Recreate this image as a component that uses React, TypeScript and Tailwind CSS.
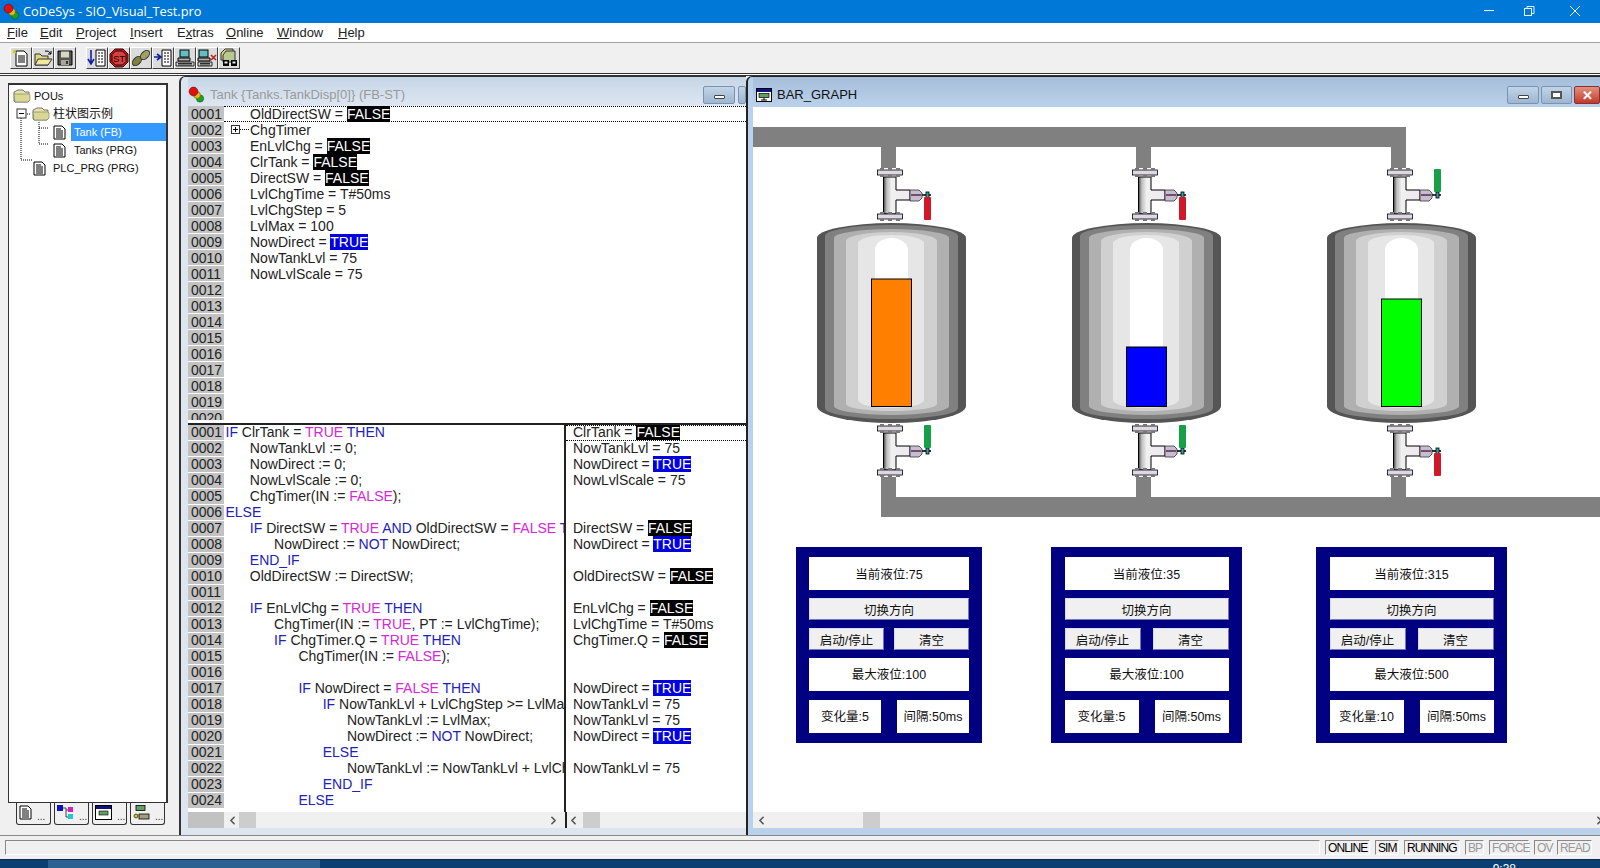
import { ChevronLeft, ChevronRight } from 'lucide-react'
import type { ReactNode } from 'react'

const TrafficIcon = () => (
  <svg width="17" height="17" viewBox="0 0 17 17">
    <circle cx="12" cy="12.5" r="3.6" fill="#20a020" stroke="#0a500a" strokeWidth="0.6" />
    <circle cx="9" cy="9" r="3.4" fill="#d8c020" stroke="#706000" strokeWidth="0.6" />
    <circle cx="5.5" cy="5.5" r="4.4" fill="#e01010" stroke="#700000" strokeWidth="0.6" />
  </svg>
)

const FolderIcon = () => (
  <svg width="18" height="14" viewBox="0 0 18 14">
    <path d="M1 3 L5 1 H10 L12 3 H16 V12 L15 13 H2 L1 12 Z" fill="#e8e4a8" stroke="#555" strokeWidth="0.8" />
    <path d="M1 5 H16 L17 6 V11 L15 13 H2 Z" fill="#d8d890" stroke="#777" strokeWidth="0.6" />
  </svg>
)

const DocIcon = ({ size = 13 }: { size?: number }) => (
  <svg width={size} height={size + 2} viewBox="0 0 13 15">
    <path d="M1 1 H9 L12 4 V14 H1 Z" fill="#fff" stroke="#000" strokeWidth="1" />
    <path d="M3 4 H8 M3 6 H10 M3 8 H10 M3 10 H10 M3 12 H10" stroke="#000" strokeWidth="1" />
  </svg>
)

const toolIcons: ReactNode[] = [
  <svg key="new" width="20" height="20" viewBox="0 0 20 20">
    <path d="M5 3 H13 L16 6 V18 H5 Z" fill="#fff" stroke="#000" />
    <path d="M7 8 H14 M7 10 H14 M7 12 H14 M7 14 H14" stroke="#000" />
    <path d="M2 2 L5 5 M5 2 L2 5" stroke="#c8c820" strokeWidth="1.4" />
  </svg>,
  <svg key="open" width="20" height="20" viewBox="0 0 20 20">
    <path d="M2 6 H7 L9 8 H15 V17 H2 Z" fill="#d8d880" stroke="#333" />
    <path d="M2 17 L5 11 H19 L15 17 Z" fill="#f0e8a0" stroke="#333" />
    <path d="M12 3 Q16 2 18 6 M18 3 V6 H15" fill="none" stroke="#000" />
  </svg>,
  <svg key="save" width="20" height="20" viewBox="0 0 20 20">
    <path d="M3 3 H17 V17 H3 Z" fill="#555" stroke="#000" />
    <rect x="6" y="3.5" width="8" height="6" fill="#d8d8c0" />
    <rect x="6" y="12" width="8" height="5" fill="#a8a890" />
    <rect x="11" y="13" width="2" height="3" fill="#333" />
  </svg>,
  <svg key="stepin" width="20" height="20" viewBox="0 0 20 20">
    <path d="M9 2 H18 V18 H9 Z" fill="#fff" stroke="#000" />
    <path d="M11 5 H16 M11 8 H16 M11 11 H16 M11 14 H16" stroke="#000" strokeDasharray="2 1" />
    <path d="M4 2 V15 M1 11 L4 16 L7 11" fill="none" stroke="#1020a0" strokeWidth="1.6" />
  </svg>,
  <svg key="stop" width="20" height="20" viewBox="0 0 20 20">
    <path d="M6 1 H14 L19 6 V14 L14 19 H6 L1 14 V6 Z" fill="#c02020" stroke="#400" />
    <path d="M6.5 3 H13.5 L17 6.5 V13.5 L13.5 17 H6.5 L3 13.5 V6.5 Z" fill="#d84040" stroke="#300" />
    <text x="10" y="13.5" textAnchor="middle" fontSize="9.5" fontFamily="Liberation Sans" fill="#200">ST</text>
  </svg>,
  <svg key="step" width="20" height="20" viewBox="0 0 20 20">
    <ellipse cx="6" cy="13" rx="3.5" ry="5.5" transform="rotate(45 6 13)" fill="#808040" stroke="#333" />
    <ellipse cx="14" cy="7" rx="3.5" ry="5.5" transform="rotate(45 14 7)" fill="#a0a060" stroke="#333" />
  </svg>,
  <svg key="stepover" width="20" height="20" viewBox="0 0 20 20">
    <path d="M9 2 H18 V18 H9 Z" fill="#fff" stroke="#000" />
    <path d="M11 5 H16 M11 8 H16 M11 11 H16 M11 14 H16" stroke="#000" strokeDasharray="2 1" />
    <path d="M1 9 H7 M4 6 L8 9 L4 12" fill="none" stroke="#1020a0" strokeWidth="1.6" />
  </svg>,
  <svg key="login" width="20" height="20" viewBox="0 0 20 20">
    <rect x="5" y="2" width="9" height="7" fill="#60c0c0" stroke="#000" />
    <path d="M3 10 H15 V13 H3 Z" fill="#b0b0b0" stroke="#000" />
    <path d="M1 14 H19 V18 H1 Z M3 15.5 H17 M3 17 H17" fill="#d0d0d0" stroke="#000" strokeWidth="0.8" />
  </svg>,
  <svg key="logout" width="20" height="20" viewBox="0 0 20 20">
    <rect x="2" y="2" width="9" height="7" fill="#60c0c0" stroke="#000" />
    <path d="M1 10 H13 V13 H1 Z" fill="#b0b0b0" stroke="#000" />
    <path d="M1 14 H15 V18 H1 Z M3 15.5 H13 M3 17 H13" fill="#d0d0d0" stroke="#000" strokeWidth="0.8" />
    <path d="M14 7 L19 12 M19 7 L14 12" stroke="#c02020" strokeWidth="1.6" />
  </svg>,
  <svg key="archive" width="20" height="20" viewBox="0 0 20 20">
    <path d="M2 5 L6 1 H14 V12 H2 Z" fill="#d8d880" stroke="#333" />
    <path d="M4 7 L7 3 H16 V14 H4 Z" fill="#b8c890" stroke="#333" />
    <rect x="4" y="12" width="6" height="6" fill="#000" />
    <rect x="12" y="12" width="6" height="6" fill="#000" />
    <rect x="5.5" y="13.5" width="3" height="2" fill="#eee" />
    <rect x="13.5" y="13.5" width="3" height="2" fill="#eee" />
  </svg>,
]

const ToolButton = ({ children }: { children: ReactNode }) => (
  <div className="flex h-[22px] w-[22px] items-center justify-center border-t border-l border-t-white border-l-white border-r border-b border-r-[#404040] border-b-[#404040] bg-[#dcdcdc]">
    {children}
  </div>
)

const menuItems = [
  { pre: '', ul: 'F', post: 'ile', w: 'w-[33px]' },
  { pre: '', ul: 'E', post: 'dit', w: 'w-[36px]' },
  { pre: '', ul: 'P', post: 'roject', w: 'w-[54px]' },
  { pre: '', ul: 'I', post: 'nsert', w: 'w-[47px]' },
  { pre: 'E', ul: 'x', post: 'tras', w: 'w-[49px]' },
  { pre: '', ul: 'O', post: 'nline', w: 'w-[51px]' },
  { pre: '', ul: 'W', post: 'indow', w: 'w-[61px]' },
  { pre: '', ul: 'H', post: 'elp', w: 'w-[40px]' },
]

const topLines = [
  ['OldDirectSW', 'FALSE'],
  ['ChgTimer'],
  ['EnLvlChg', 'FALSE'],
  ['ClrTank', 'FALSE'],
  ['DirectSW', 'FALSE'],
  ['LvlChgTime', 'T#50ms'],
  ['LvlChgStep', '5'],
  ['LvlMax', '100'],
  ['NowDirect', 'TRUE'],
  ['NowTankLvl', '75'],
  ['NowLvlScale', '75'],
]

const codeLines: [number, string][] = [
  [0, 'IF ClrTank = TRUE THEN'],
  [1, 'NowTankLvl := 0;'],
  [1, 'NowDirect := 0;'],
  [1, 'NowLvlScale := 0;'],
  [1, 'ChgTimer(IN := FALSE);'],
  [0, 'ELSE'],
  [1, 'IF DirectSW = TRUE AND OldDirectSW = FALSE THEN'],
  [2, 'NowDirect := NOT NowDirect;'],
  [1, 'END_IF'],
  [1, 'OldDirectSW := DirectSW;'],
  [0, ''],
  [1, 'IF EnLvlChg = TRUE THEN'],
  [2, 'ChgTimer(IN := TRUE, PT := LvlChgTime);'],
  [2, 'IF ChgTimer.Q = TRUE THEN'],
  [3, 'ChgTimer(IN := FALSE);'],
  [0, ''],
  [3, 'IF NowDirect = FALSE THEN'],
  [4, 'IF NowTankLvl + LvlChgStep >= LvlMax THEN'],
  [5, 'NowTankLvl := LvlMax;'],
  [5, 'NowDirect := NOT NowDirect;'],
  [4, 'ELSE'],
  [5, 'NowTankLvl := NowTankLvl + LvlChgStep;'],
  [4, 'END_IF'],
  [3, 'ELSE'],
]

const watchLines: (string[] | null)[] = [
  ['ClrTank', 'FALSE'],
  ['NowTankLvl', '75'],
  ['NowDirect', 'TRUE'],
  ['NowLvlScale', '75'],
  null,
  null,
  ['DirectSW', 'FALSE'],
  ['NowDirect', 'TRUE'],
  null,
  ['OldDirectSW', 'FALSE'],
  null,
  ['EnLvlChg', 'FALSE'],
  ['LvlChgTime', 'T#50ms'],
  ['ChgTimer.Q', 'FALSE'],
  null,
  null,
  ['NowDirect', 'TRUE'],
  ['NowTankLvl', '75'],
  ['NowTankLvl', '75'],
  ['NowDirect', 'TRUE'],
  null,
  ['NowTankLvl', '75'],
  null,
  null,
]

const lineNo = (i: number) => String(i + 1).padStart(4, '0')

const Token = ({ word }: { word: string }) => {
  if (/^(IF|THEN|ELSE|END_IF|AND|NOT)$/.test(word)) return <span className="text-[#2222bb]">{word}</span>
  if (/^(TRUE|FALSE)$/.test(word)) return <span className="text-[#d628d6]">{word}</span>
  return <>{word}</>
}

const CodeText = ({ text }: { text: string }) => (
  <>
    {text.split(/(\bEND_IF\b|\bIF\b|\bTHEN\b|\bELSE\b|\bAND\b|\bNOT\b|\bTRUE\b|\bFALSE\b)/).map((w, i) => (
      <Token key={i} word={w} />
    ))}
  </>
)

const Watch = ({ line }: { line: string[] }) => {
  const value = line[1]
  let shown: ReactNode = value
  if (value === 'FALSE') shown = <span className="bg-black text-white">FALSE</span>
  if (value === 'TRUE') shown = <span className="bg-[#0000e0] text-white">TRUE</span>
  return (
    <>
      {line[0]}
      {value ? ' = ' : ''}
      {shown}
    </>
  )
}

const NumCell = ({ i, top }: { i: number; top?: boolean }) => (
  <div
    className={`h-[16px] w-[36px] shrink-0 overflow-hidden border-b border-white bg-[#c2c2c2] pl-[3px] text-[14px] text-[#222] ${
      top ? 'leading-[17px]' : 'leading-[15px]'
    }`}
  >
    {lineNo(i)}
  </div>
)

const ScrollBar = ({ thumb, right }: { thumb: string; right?: boolean }) => (
  <div className="flex h-[16px] min-w-0 flex-1 items-center bg-[#f0f0f0]">
    <ChevronLeft size={13} strokeWidth={3} className="shrink-0 text-[#555]" />
    <div className={`h-[16px] w-[17px] shrink-0 bg-[#cdcdcd] ${thumb}`} />
    <div className="flex-1" />
    {right && <ChevronRight size={13} strokeWidth={3} className="mr-[5px] shrink-0 text-[#555]" />}
  </div>
)

const WinButton = ({ kind, w }: { kind: 'min' | 'max' | 'close' | 'plain'; w: string }) => (
  <div
    className={`flex h-[18px] items-center justify-center rounded-[2px] border ${w} ${
      kind === 'close'
        ? 'border-[#8a3030] bg-gradient-to-b from-[#e09080] to-[#c03828]'
        : 'border-[#7c93ae] bg-gradient-to-b from-[#c2d4e8] to-[#9db6d0]'
    }`}
  >
    {kind === 'min' && <div className="mt-[4px] h-[4px] w-[11px] rounded-[1px] border border-[#444] bg-white" />}
    {kind === 'max' && <div className="h-[8px] w-[11px] border-2 border-[#555] bg-white" />}
    {kind === 'close' && <span className="text-[13px] leading-none font-bold text-white">✕</span>}
  </div>
)

// one tank body: nested bands with domed ends, like the bitmap in the visualization
const bands: [number, number, number, number, number, number, string][] = [
  [817, 966, 238, 223, 406, 423, '#555555'],
  [825, 958, 236, 225, 408, 419, '#808080'],
  [834, 949, 238, 229, 406, 415, '#b0b0b0'],
  [846, 937, 241, 232, 404, 411, '#d0d0d0'],
  [858, 924, 243, 235, 400, 408, '#e6e6e6'],
  [875, 908, 250, 238, 400, 406, '#ffffff'],
]

const Tank = ({ dx, top, fill }: { dx: number; top: number; fill: string }) => (
  <g transform={`translate(${dx} 0)`}>
    {bands.map(([x0, x1, ys, a, yb, ba, c]) => {
      const rx = (x1 - x0) / 2
      return (
        <path
          key={c}
          fill={c}
          d={`M${x0} ${yb} V${ys} A${rx} ${ys - a} 0 0 1 ${x1} ${ys} V${yb} A${rx} ${ba - yb} 0 0 1 ${x0} ${yb} Z`}
        />
      )
    })}
    <rect x="871.5" y={top} width="40" height={406.5 - top} fill={fill} stroke="#000" />
  </g>
)

const Flange = ({ y }: { y: number }) => (
  <g>
    <rect x="877.5" y={y + 2} width="25" height="5" fill="#dcd8e4" stroke="#000" strokeWidth="0.8" />
    <rect x="880" y={y} width="4" height="2" fill="#777" />
    <rect x="888" y={y} width="4" height="2" fill="#777" />
    <rect x="896" y={y} width="4" height="2" fill="#777" />
    <rect x="880" y={y + 7} width="4" height="2" fill="#777" />
    <rect x="888" y={y + 7} width="4" height="2" fill="#777" />
    <rect x="896" y={y + 7} width="4" height="2" fill="#777" />
  </g>
)

const Valve = ({ dx, y, color, up }: { dx: number; y: number; color: string; up: boolean }) => (
  <g transform={`translate(${dx} ${y - 168})`}>
    <path d="M883.5 177 H896 V190 H910 V200 H896 V214 H883.5 Z" fill="url(#valveBody)" stroke="#000" strokeWidth="1" />
    <Flange y={168} />
    <Flange y={212} />
    <path d="M910 190 H919 L922 193 V198 L919 201 H910 Z" fill="#c8bcd0" stroke="#333" strokeWidth="0.8" />
    <rect x="911" y="194" width="10" height="2" fill="#705070" />
    <path d="M922 195 H931" stroke="#000" strokeWidth="1.6" />
    <rect x="926" y="192" width="3" height="6" fill="#30a0a0" stroke="#000" strokeWidth="0.8" />
    <rect x="924" y={up ? 169 : 197} width="7" height="23" rx="1" fill={color} />
  </g>
)

const DiagramCanvas = () => (
  <svg width="847" height="433" viewBox="753 107 847 433" className="block shrink-0">
    <defs>
      <linearGradient id="valveBody" x1="0" x2="1" y1="0" y2="0">
        <stop offset="0" stopColor="#444" />
        <stop offset="0.12" stopColor="#bbb" />
        <stop offset="0.3" stopColor="#f0f0f0" />
        <stop offset="1" stopColor="#eee8f0" />
      </linearGradient>
    </defs>
    <rect x="753" y="127" width="653" height="20" fill="#808080" />
    <rect x="881" y="497" width="719" height="20" fill="#808080" />
    {[0, 255, 510].map(dx => (
      <g key={dx} fill="#808080">
        <rect x={881 + dx} y="147" width="15" height="21" />
        <rect x={881 + dx} y="477" width="15" height="20" />
      </g>
    ))}
    <Tank dx={0} top={279} fill="#ff8000" />
    <Tank dx={255} top={347} fill="#0000ff" />
    <Tank dx={510} top={299} fill="#00ff00" />
    <Valve dx={0} y={168} color="#d01828" up={false} />
    <Valve dx={255} y={168} color="#d01828" up={false} />
    <Valve dx={510} y={168} color="#18a048" up={true} />
    <Valve dx={0} y={424} color="#18a048" up={true} />
    <Valve dx={255} y={424} color="#18a048" up={true} />
    <Valve dx={510} y={424} color="#d01828" up={false} />
  </svg>
)

const Field = ({ children, className }: { children: ReactNode; className: string }) => (
  <div className={`flex items-center justify-center bg-white text-[12.5px] text-[#111] ${className}`}>{children}</div>
)

const PanelButton = ({ children, className }: { children: ReactNode; className: string }) => (
  <div
    className={`flex h-[22px] items-center justify-center border border-t-[#d8dcf4] border-l-[#d8dcf4] border-r-[#7078b8] border-b-[#7078b8] bg-[#f0f0f0] pt-[4px] text-[12.5px] text-[#111] ${className}`}
  >
    {children}
  </div>
)

const panels = [
  { level: 75, max: 100, step: 5, box: 'ml-[43px] w-[186px]', inner: 'w-[160px]', cell: 'w-[72px]', half: 'w-[75px]' },
  { level: 35, max: 100, step: 5, box: 'ml-[69px] w-[191px]', inner: 'w-[164px]', cell: 'w-[74px]', half: 'w-[76px]' },
  { level: 315, max: 500, step: 10, box: 'ml-[74px] w-[191px]', inner: 'w-[164px]', cell: 'w-[74px]', half: 'w-[76px]' },
]

const ControlPanel = ({ panel }: { panel: (typeof panels)[number] }) => (
  <div className={`flex h-[196px] shrink-0 justify-center bg-[#000080] pt-[10px] ${panel.box}`}>
    <div className={`flex flex-col gap-[8px] ${panel.inner}`}>
      <Field className="h-[33px] pt-[4px]">当前液位:{panel.level}</Field>
      <PanelButton className="w-full">切换方向</PanelButton>
      <div className="flex justify-between">
        <PanelButton className={panel.half}>启动/停止</PanelButton>
        <PanelButton className={panel.half}>清空</PanelButton>
      </div>
      <Field className="h-[33px] pt-[2px]">最大液位:{panel.max}</Field>
      <div className="mt-[1px] flex justify-between">
        <Field className={`h-[33px] pt-[2px] ${panel.cell}`}>变化量:{panel.step}</Field>
        <Field className={`h-[33px] pt-[2px] ${panel.cell}`}>间隔:50ms</Field>
      </div>
    </div>
  </div>
)

const statusItems = [
  { t: 'ONLINE', w: 'w-[45px]', on: true },
  { t: 'SIM', w: 'w-[24px]', on: true },
  { t: 'RUNNING', w: 'w-[56px]', on: true },
  { t: 'BP', w: 'w-[19px]', on: false },
  { t: 'FORCE', w: 'w-[40px]', on: false },
  { t: 'OV', w: 'w-[18px]', on: false },
  { t: 'READ', w: 'w-[35px]', on: false },
]

const TreePanel = () => (
  <div className="flex w-[179px] shrink-0 flex-col bg-[#f0f0f0] pt-[7px] pl-[8px]">
    <div className="relative h-[720px] w-[160px] border border-t-2 border-r-2 border-[#333] bg-white pt-[2px] pl-[4px] text-[11px] text-[#111]">
      {/* tree connector lines lie over the rows */}
      <svg className="absolute top-[-3px] left-0" width="60" height="100">
        <path d="M12 32 V78 H24 M12 32 H22 M30 40 V62 H40 M30 46 H40" fill="none" stroke="#000" strokeDasharray="1 1" />
        <rect x="8" y="27" width="9" height="9" fill="#fff" stroke="#333" />
        <path d="M10 31.5 H15" stroke="#000" />
      </svg>
      <div className="flex h-[18px] items-center gap-[3px]">
        <FolderIcon />
        <span>POUs</span>
      </div>
      <div className="flex h-[18px] items-center gap-[3px] pl-[19px]">
        <FolderIcon />
        <span className="text-[12px]">柱状图示例</span>
      </div>
      <div className="flex h-[18px] items-center pl-[40px]">
        <DocIcon />
        <span className="ml-[5px] flex h-[18px] flex-1 items-center bg-[#3399ff] pl-[3px] text-white">Tank (FB)</span>
      </div>
      <div className="flex h-[18px] items-center pl-[40px]">
        <DocIcon />
        <span className="ml-[5px] pl-[3px]">Tanks (PRG)</span>
      </div>
      <div className="flex h-[18px] items-center gap-[7px] pl-[20px]">
        <DocIcon />
        <span>PLC_PRG (PRG)</span>
      </div>
    </div>
    <div className="ml-[8px] flex gap-[3px]">
      {[
        <DocIcon key="a" size={13} />,
        <svg key="b" width="17" height="15" viewBox="0 0 17 15">
          <rect x="0" y="0" width="6" height="6" fill="#1010c0" />
          <rect x="11" y="2" width="5" height="5" fill="#d020c0" />
          <rect x="11" y="9" width="5" height="5" fill="#20c8d0" />
          <path d="M6 3 H9 V12 H11 M9 5 H11" fill="none" stroke="#444" />
        </svg>,
        <svg key="c" width="17" height="15" viewBox="0 0 17 15">
          <rect x="0.5" y="0.5" width="16" height="14" fill="#fff" stroke="#000" />
          <rect x="1" y="1" width="15" height="3" fill="#101080" />
          <rect x="4" y="6" width="9" height="4" fill="#60a060" stroke="#000" strokeWidth="0.6" />
        </svg>,
        <svg key="d" width="17" height="15" viewBox="0 0 17 15">
          <rect x="3" y="0.5" width="9" height="5" fill="#60a060" stroke="#000" strokeWidth="0.8" />
          <rect x="6" y="9" width="10" height="5" fill="#a0a080" stroke="#000" strokeWidth="0.8" />
          <circle cx="3" cy="11" r="2" fill="#c8c820" stroke="#000" strokeWidth="0.6" />
        </svg>,
      ].map((icon, i) => (
        <div
          key={i}
          className="flex h-[22px] w-[35px] items-start gap-[5px] rounded-b-[3px] border-r border-b border-l border-[#333] bg-[#f0f0f0] pt-[2px] pl-[2px] text-[10px] text-[#333]"
        >
          {icon}
          <span className="mt-[4px]">...</span>
        </div>
      ))}
    </div>
  </div>
)

const TankWindow = () => (
  <div className="flex w-[567px] shrink-0 flex-col rounded-tl-[6px] border-t border-l-2 border-[#333] bg-[#dde6f0] pl-[7px]">
    <div className="flex h-[29px] shrink-0 items-center bg-gradient-to-b from-[#c6d5e6] to-[#dde7f2] pt-[6px]">
      <TrafficIcon />
      <span className="ml-[5px] text-[13px] text-[#9a9a9a]">Tank {'{Tanks.TankDisp[0]}'} (FB-ST)</span>
      <div className="flex-1" />
      <WinButton kind="min" w="w-[32px]" />
      <WinButton kind="plain" w="ml-[3px] w-[8px]" />
    </div>

    {/* declaration part */}
    <div className="flex h-[314px] shrink-0 overflow-hidden bg-white text-[14px] text-[#222]">
      <div className="shrink-0">
        {Array.from({ length: 20 }, (_, i) => (
          <NumCell key={i} i={i} top />
        ))}
      </div>
      <div className="min-w-0 flex-1">
        {topLines.map((line, i) => (
          <div
            key={i}
            className={`relative h-[16px] pl-[26px] whitespace-pre ${
              i === 0 ? 'border-y border-dotted border-black leading-[15px]' : 'leading-[17px]'
            }`}
          >
            {i === 1 && (
              <svg className="absolute top-[3px] left-[7px]" width="20" height="10">
                <rect x="0.5" y="0.5" width="8" height="8" fill="#fff" stroke="#333" />
                <path d="M2 4.5 H7 M4.5 2 V7" stroke="#000" />
                <path d="M9 4.5 H18" stroke="#000" strokeDasharray="1 1" />
              </svg>
            )}
            <Watch line={line} />
          </div>
        ))}
      </div>
    </div>
    <div className="h-[3px] shrink-0 bg-white" />
    <div className="h-[2px] shrink-0 bg-[#222]" />

    {/* body part */}
    <div className="flex h-[387px] shrink-0 overflow-hidden bg-white text-[14px] leading-[15px] text-[#222]">
      <div className="shrink-0">
        {codeLines.map((_, i) => (
          <NumCell key={i} i={i} />
        ))}
      </div>
      <div className="w-[340px] shrink-0 overflow-hidden pl-[1.5px]">
        {codeLines.map(([indent, text], i) => (
          <div key={i} className="h-[16px] whitespace-pre" style={{ paddingLeft: indent * 24.3 }}>
            <CodeText text={text} />
          </div>
        ))}
      </div>
      <div className="min-w-0 flex-1 border-l-2 border-[#222]">
        {watchLines.map((line, i) => (
          <div
            key={i}
            className={`h-[16px] pl-[7px] whitespace-pre ${i === 0 ? 'border-y border-dotted border-black leading-[13px]' : ''}`}
          >
            {line && <Watch line={line} />}
          </div>
        ))}
      </div>
    </div>
    <div className="flex h-[16px] shrink-0">
      <div className="w-[36px] shrink-0 bg-[#c2c2c2]" />
      <div className="w-[2px] shrink-0 bg-[#f0f0f0]" />
      <ScrollBar thumb="" right />
      <div className="w-[2px] shrink-0 bg-[#222]" />
      <div className="flex w-[179px] shrink-0">
        <ScrollBar thumb="ml-[3px]" />
      </div>
    </div>
  </div>
)

const BarGraphWindow = () => (
  <div className="flex w-[854px] shrink-0 flex-col overflow-hidden rounded-tl-[6px] border-t border-l-2 border-[#222] bg-[#b9d1ea] pl-[5px]">
    <div className="flex h-[30px] shrink-0 items-center bg-gradient-to-b from-[#a6bed9] to-[#b9d1ea] pt-[6px] pl-[3px]">
      <svg width="16" height="14" viewBox="0 0 16 14">
        <rect x="0.5" y="0.5" width="15" height="13" fill="#fff" stroke="#000" />
        <rect x="1" y="1" width="14" height="3" fill="#101080" />
        <rect x="3" y="5.5" width="10" height="4" fill="#60a060" stroke="#000" strokeWidth="0.7" />
        <path d="M8 9.5 V12 M5 12 H11" stroke="#000" />
      </svg>
      <span className="ml-[5px] text-[13px] text-[#111]">BAR_GRAPH</span>
      <div className="flex-1" />
      <WinButton kind="min" w="w-[32px]" />
      <WinButton kind="max" w="ml-[2px] w-[31px]" />
      <WinButton kind="close" w="ml-[2px] w-[26px]" />
    </div>
    <div className="h-[705px] shrink-0 overflow-hidden bg-white">
      <DiagramCanvas />
      <div className="mt-[7px] flex">
        {panels.map(p => (
          <ControlPanel key={p.level} panel={p} />
        ))}
      </div>
    </div>
    <div className="flex h-[16px] shrink-0 items-center bg-[#f0f0f0]">
      <ChevronLeft size={13} strokeWidth={3} className="ml-[2px] shrink-0 text-[#555]" />
      <div className="ml-[95px] h-[16px] w-[17px] bg-[#cdcdcd]" />
      <div className="flex-1" />
      <ChevronRight size={13} strokeWidth={3} className="-mr-[6px] shrink-0 text-[#555]" />
    </div>
  </div>
)

export default function App() {
  return (
    <div className="flex h-[868px] w-[1600px] flex-col overflow-hidden bg-[#f0f0f0] font-['Liberation_Sans','Noto_Sans_CJK_SC',sans-serif]">
      {/* window title */}
      <div className="flex h-[23px] shrink-0 items-center bg-[#0078d7] pl-[3px] text-white">
        <TrafficIcon />
        <span className="ml-[3px] font-['Open_Sans',sans-serif] text-[12.8px]">CoDeSys - SIO_Visual_Test.pro</span>
        <div className="flex-1" />
        <svg width="116" height="23" viewBox="0 0 116 23" fill="none" stroke="#e8f2fb">
          <path d="M0 10.5 H10" />
          <rect x="40.5" y="8.5" width="7" height="7" />
          <path d="M43 8 V6.5 H50 V13.5 H48" />
          <path d="M86 6 L96 16 M96 6 L86 16" />
        </svg>
      </div>

      {/* menu */}
      <div className="flex h-[19px] shrink-0 items-center bg-white pl-[7px] text-[13px] text-[#222]">
        {menuItems.map(m => (
          <span key={m.ul + m.post} className={m.w}>
            {m.pre}
            <span className="underline">{m.ul}</span>
            {m.post}
          </span>
        ))}
      </div>

      {/* toolbar */}
      <div className="flex h-[31px] shrink-0 items-center border-t border-[#a0a0a0] pl-[10px]">
        {toolIcons.slice(0, 3).map((icon, i) => (
          <ToolButton key={i}>{icon}</ToolButton>
        ))}
        <div className="w-[10px]" />
        {toolIcons.slice(3).map((icon, i) => (
          <ToolButton key={i}>{icon}</ToolButton>
        ))}
      </div>
      <div className="h-[3px] shrink-0 border-y border-[#333] bg-white" />

      {/* workspace */}
      <div className="flex h-[759px] shrink-0 overflow-hidden">
        <TreePanel />
        <TankWindow />
        <BarGraphWindow />
      </div>

      {/* status bar */}
      <div className="flex h-[24px] shrink-0 items-start gap-[5px] border-t border-[#888] pt-[4px] pl-[5px] text-[12px] leading-[15px] tracking-[-0.9px]">
        <div className="h-[15px] w-[1315px] shrink-0 border-t border-l border-t-[#888] border-l-[#888] border-b border-r border-b-white border-r-white" />
        {statusItems.map(s => (
          <div
            key={s.t}
            className={`h-[15px] shrink-0 border-t border-l border-t-[#888] border-l-[#888] border-b border-r border-b-white border-r-white pl-[2px] leading-[14px] ${s.w} ${
              s.on ? 'text-black' : 'text-[#999]'
            }`}
          >
            {s.t}
          </div>
        ))}
      </div>

      {/* taskbar, cut off by the bottom of the picture */}
      <div className="flex h-[9px] shrink-0 overflow-hidden border-t border-[#0a2a50] bg-[#0b3f72] text-[12px] leading-[12px] text-white">
        <div className="w-[48px] shrink-0" />
        <div className="w-[272px] shrink-0 bg-[#2a6190]" />
        <div className="flex-1" />
        <span className="mt-[3px] mr-[84px]">9:38</span>
      </div>
    </div>
  )
}
